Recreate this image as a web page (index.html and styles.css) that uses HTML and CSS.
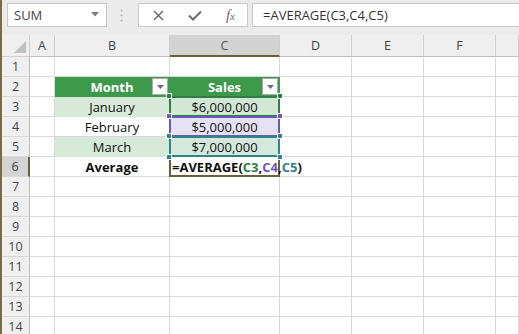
FILE: index.html
```html
<!DOCTYPE html>
<html>
<head>
<meta charset="utf-8">
<link rel="stylesheet" href="styles.css">
</head>
<body>
<div class="app">
  <div class="fbar">
    <div class="namebox">
      <span class="nb-text">SUM</span>
      <svg class="nb-arrow" width="8" height="5" viewBox="0 0 8 5"><path d="M0 0H8L4 4.5Z" fill="#7a7a7a"/></svg>
    </div>
    <div class="grip">
      <svg width="3" height="13" viewBox="0 0 3 13"><circle cx="1.5" cy="1.5" r="1" fill="#b4b4b4"/><circle cx="1.5" cy="6.5" r="1" fill="#b4b4b4"/><circle cx="1.5" cy="11.5" r="1" fill="#b4b4b4"/></svg>
    </div>
    <div class="btns">
      <svg width="11" height="11" viewBox="0 0 11 11"><path d="M1 1L10 10M10 1L1 10" stroke="#6b6b6b" stroke-width="1.5"/></svg>
      <svg width="14" height="11" viewBox="0 0 14 11"><path d="M1 5.5L5 9.5L13 1.5" stroke="#6b6b6b" stroke-width="2" fill="none"/></svg>
      <span class="fx">f<span class="fx-sub">x</span></span>
    </div>
    <div class="finput">=AVERAGE(C3,C4,C5)</div>
  </div>
  <div class="sheet">
    <div class="hd corner"><span class="tri"></span></div>
    <div class="hd col">A</div>
    <div class="hd col">B</div>
    <div class="hd col sel">C</div>
    <div class="hd col">D</div>
    <div class="hd col">E</div>
    <div class="hd col">F</div>
    <div class="hd col"></div>

    <div class="hd row">1</div>
    <div class="c"></div><div class="c"></div><div class="c"></div><div class="c"></div><div class="c"></div><div class="c"></div><div class="c"></div>

    <div class="hd row">2</div>
    <div class="c"></div>
    <div class="c th">Month<span class="dd"><svg width="7" height="4" viewBox="0 0 7 4"><path d="M0 0H7L3.5 4Z" fill="#6e6e6e"/></svg></span></div>
    <div class="c th">Sales<span class="dd"><svg width="7" height="4" viewBox="0 0 7 4"><path d="M0 0H7L3.5 4Z" fill="#6e6e6e"/></svg></span></div>
    <div class="c"></div><div class="c"></div><div class="c"></div><div class="c"></div>

    <div class="hd row">3</div>
    <div class="c"></div>
    <div class="c band">January</div>
    <div class="c rg rg-green">$6,000,000<i class="sq tl"></i><i class="sq tr"></i></div>
    <div class="c"></div><div class="c"></div><div class="c"></div><div class="c"></div>

    <div class="hd row">4</div>
    <div class="c"></div>
    <div class="c plain">February</div>
    <div class="c rg rg-purple">$5,000,000<i class="sq tl"></i><i class="sq tr"></i></div>
    <div class="c"></div><div class="c"></div><div class="c"></div><div class="c"></div>

    <div class="hd row">5</div>
    <div class="c"></div>
    <div class="c band">March</div>
    <div class="c rg rg-teal">$7,000,000<i class="sq tl"></i><i class="sq tr"></i><i class="sq bl"></i><i class="sq br"></i></div>
    <div class="c"></div><div class="c"></div><div class="c"></div><div class="c"></div>

    <div class="hd row rsel">6</div>
    <div class="c"></div>
    <div class="c plain bold">Average</div>
    <div class="c active"><span class="k">=AVERAGE(</span><span class="g">C3</span><span class="k">,</span><span class="p">C4</span><span class="k">,</span><span class="t">C5</span><span class="k">)</span></div>
    <div class="c over"></div><div class="c"></div><div class="c"></div><div class="c"></div>

    <div class="hd row">7</div>
    <div class="c"></div><div class="c"></div><div class="c"></div><div class="c"></div><div class="c"></div><div class="c"></div><div class="c"></div>
    <div class="hd row">8</div>
    <div class="c"></div><div class="c"></div><div class="c"></div><div class="c"></div><div class="c"></div><div class="c"></div><div class="c"></div>
    <div class="hd row">9</div>
    <div class="c"></div><div class="c"></div><div class="c"></div><div class="c"></div><div class="c"></div><div class="c"></div><div class="c"></div>
    <div class="hd row">10</div>
    <div class="c"></div><div class="c"></div><div class="c"></div><div class="c"></div><div class="c"></div><div class="c"></div><div class="c"></div>
    <div class="hd row">11</div>
    <div class="c"></div><div class="c"></div><div class="c"></div><div class="c"></div><div class="c"></div><div class="c"></div><div class="c"></div>
    <div class="hd row">12</div>
    <div class="c"></div><div class="c"></div><div class="c"></div><div class="c"></div><div class="c"></div><div class="c"></div><div class="c"></div>
    <div class="hd row">13</div>
    <div class="c"></div><div class="c"></div><div class="c"></div><div class="c"></div><div class="c"></div><div class="c"></div><div class="c"></div>
    <div class="hd row">14</div>
    <div class="c"></div><div class="c"></div><div class="c"></div><div class="c"></div><div class="c"></div><div class="c"></div><div class="c"></div>
  </div>
</div>
</body>
</html>
```
FILE: styles.css
```css
* { box-sizing: border-box; }
html, body { margin: 0; padding: 0; }
body {
  width: 519px;
  height: 334px;
  overflow: hidden;
  background: #ffffff;
  font-family: "Open Sans", "Noto Sans", sans-serif;
}
.app {
  border-left: 2px solid #7a6a45;
  height: 334px;
  overflow: hidden;
}
.fbar {
  height: 35px;
  background: #ebebeb;
  display: flex;
  align-items: flex-start;
  padding: 3px 0 0 5px;
}
.namebox {
  width: 100px;
  height: 24px;
  background: #fff;
  border: 1px solid #c8c8c8;
  display: flex;
  align-items: center;
  justify-content: space-between;
  padding: 0 7px 0 6px;
}
.nb-text {
  font-size: 13px;
  color: #444;
}
.nb-arrow { margin-top: -2px; }
.grip {
  width: 31px;
  height: 24px;
  display: flex;
  align-items: center;
  justify-content: center;
  padding-right: 2px;
}
.btns {
  width: 110px;
  height: 24px;
  background: #fff;
  border: 1px solid #c8c8c8;
  display: flex;
  align-items: center;
  justify-content: space-between;
  padding: 0 12px 0 14px;
}
.fx {
  font-family: "Liberation Serif", serif;
  font-style: italic;
  font-size: 15px;
  color: #6b6b6b;
}
.fx-sub { font-size: 11px; }
.finput {
  margin-left: 4px;
  flex: 1;
  height: 24px;
  background: #fff;
  border: 1px solid #c8c8c8;
  border-right: none;
  font-size: 13px;
  color: #333;
  line-height: 22px;
  padding-left: 10px;
}
.sheet {
  display: grid;
  grid-template-columns: 28px 25px 115px 110px 72px 72px 72px 23px;
  grid-template-rows: 22px repeat(14, 20px);
}
.hd {
  background: #efefef;
  color: #444;
  font-size: 12.5px;
  display: flex;
  align-items: center;
  justify-content: center;
  border-right: 1px solid #cfcfcf;
  border-bottom: 1px solid #cfcfcf;
}
.hd.col { border-bottom-color: #bdbdbd; }
.hd.row { border-right-color: #bdbdbd; border-bottom-color: #d8d8d8; }
.hd.sel {
  background: #d3d3d3;
  border-bottom: 2px solid #6b5e3a;
  color: #555;
}
.hd.rsel {
  background: #d3d3d3;
  border-right: 2px solid #6b5e3a;
}
.corner { position: relative; }
.tri {
  position: absolute;
  right: 3px;
  bottom: 3px;
  width: 0;
  height: 0;
  border-left: 12px solid transparent;
  border-bottom: 12px solid #c0c0c0;
}
.c {
  border-right: 1px solid #d9d9d9;
  border-bottom: 1px solid #d9d9d9;
  font-size: 13px;
  color: #111;
  display: flex;
  align-items: center;
  justify-content: center;
  white-space: nowrap;
  position: relative;
}
.th {
  background: #3d9a4b;
  border-color: #3d9a4b;
  color: #fff;
  font-weight: 700;
}
.dd {
  position: absolute;
  right: 1px;
  top: 1px;
  width: 16px;
  height: 17px;
  background: #fff;
  border: 1px solid #a9a9a9;
  display: flex;
  align-items: center;
  justify-content: center;
}
.band { background: #d7eada; border-bottom-color: #d7eada; }
.plain { background: #fff; }
.bold { font-weight: 700; }
.rg-green { background: #d3e7d6; }
.rg-purple { background: #e6e2f5; }
.rg-teal { background: #d4e8dd; }
.rg::after {
  content: "";
  position: absolute;
  left: -1px;
  top: -1px;
  right: -1px;
  bottom: -1px;
  border: 2px solid var(--rc);
  pointer-events: none;
}
.rg-green { --rc: #2e8040; }
.rg-purple { --rc: #6a58b8; }
.rg-teal { --rc: #2f8585; }
.rg-green::after { z-index: 1; }
.rg-purple::after { z-index: 2; }
.rg-teal::after { z-index: 3; }
.sq {
  position: absolute;
  width: 6px;
  height: 6px;
  background: var(--rc);
  border: 1px solid #fff;
  z-index: 5;
}
.sq.tl { left: -4px; top: -4px; }
.sq.tr { right: -4px; top: -4px; }
.sq.bl { left: -4px; bottom: -4px; }
.sq.br { right: -4px; bottom: -4px; }
.active {
  justify-content: flex-start;
  padding-left: 2px;
  padding-top: 1px;
  font-weight: 700;
  font-size: 13px;
  z-index: 4;
  background: #fff;
}
.active::after {
  content: "";
  position: absolute;
  left: -1px;
  top: -1px;
  right: -1px;
  bottom: -1px;
  border: 2px solid #6b5e3a;
  border-top-color: transparent;
  pointer-events: none;
  z-index: -1;
}
.k { color: #111; }
.g { color: #2e8040; }
.p { color: #6a58b8; }
.t { color: #2f8585; }
.over { border-left: none; }
```
